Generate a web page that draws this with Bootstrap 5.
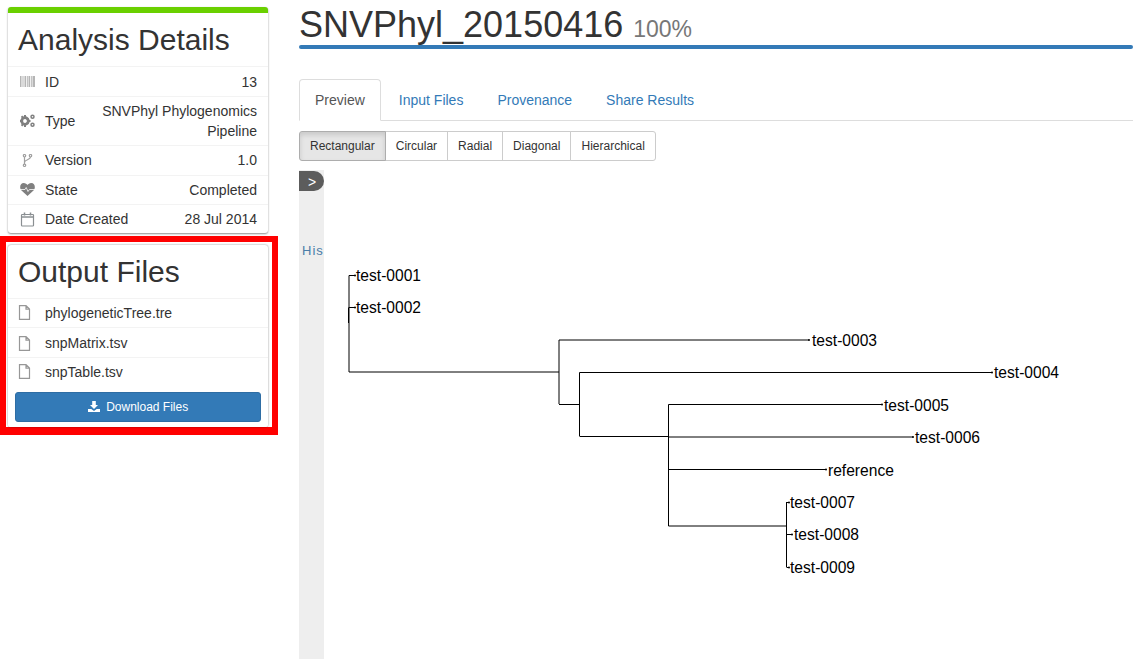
<!DOCTYPE html>
<html lang="en">
<head>
    <meta charset="UTF-8">
    <title>SNVPhyl_20150416</title>
    <link href="https://cdn.jsdelivr.net/npm/bootstrap@5.3.0/dist/css/bootstrap.min.css" rel="stylesheet">
    <style>
        html, body { height: 100%; overflow: hidden; }
        body { font-family: "Liberation Sans", Arial, sans-serif; font-size: 14px; line-height: 20px; color: #333; background: #fff; }
        a { color: #337ab7; text-decoration: none; }
        .page-wrap { height: 659px; }
        .left-col { width: 278px; flex: none; padding-top: 7px; }
        .right-col { width: 834px; flex: none; margin-left: 21px; }
        .info-card { margin: 0 10px 0 8px; border: 0; border-radius: 3px; background: #fff; box-shadow: 0 1px 2px rgba(0,0,0,.45); overflow: hidden; }
        .info-card.analysis { border-top: 6px solid #6ad000; }
        .info-title { font-size: 30px; line-height: 33px; font-weight: 400; margin: 0; padding: 10px; }
        .list-group-flush .info-row { display: flex; align-items: center; padding: 4.25px 11px 4.25px 12px; border-width: 1px 0 0; border-style: solid; border-color: #f3f3f3; border-radius: 0; color: #333; background: transparent; white-space: nowrap; }
        .list-group-flush .info-row.nudge-down { padding-top: 5px; padding-bottom: 3.5px; }
        .list-group-flush .info-row.last-row { padding-bottom: 3.25px; }
        .info-icon { width: 25px; flex: none; display: flex; }
        .info-value { margin-left: auto; text-align: right; width: 165px; white-space: normal; }
        .red-box { border: 6px solid #f00; border-bottom-width: 8px; margin: 3px 0 0 0; padding: 3px 4px 0 2px; height: 199px; width: 278px; }
        .red-box .info-card { margin: 0; box-shadow: 0 0 2px rgba(0,0,0,.5); }
        .list-group-flush .file-row { padding-left: 10px; }
        .file-row .info-icon { width: 27px; }
        .btn-row { border-top: 1px solid #f3f3f3; }
        .download-btn { display: block; margin: 6px 7px 5px; background: #337ab7; border: 1px solid #2e6da4; color: #fff; font-size: 12px; line-height: 18px; padding: 5px 10px; border-radius: 3px; width: 246px; }
        .download-btn svg { vertical-align: -1px; margin-right: 3px; }
        .run-title { font-size: 36px; line-height: 40px; font-weight: 400; margin: 0; padding-top: 5px; height: 45px; }
        .run-title small { font-size: 23px; color: #777; }
        .title-rule { height: 4px; background: #337ab7; border-radius: 2px; }
        .result-tabs { margin-top: 30px; border-bottom: 1px solid #ddd; font-size: 14px; }
        .result-tabs .nav-link { padding: 10px 15px; line-height: 20px; margin-right: 2px; margin-bottom: -1px; border: 1px solid transparent; border-radius: 4px 4px 0 0; color: #337ab7; }
        .result-tabs .nav-link.active { color: #555; background: #fff; border-color: #ddd #ddd #fff; }
        .layout-btns { margin-top: 10px; }
        .layout-btns .btn { font-size: 12px; line-height: 18px; padding: 5px 10px; color: #333; background: #fff; border: 1px solid #ccc; border-radius: 3px; }
        .layout-btns .btn.active { background: #e6e6e6; border-color: #adadad; box-shadow: inset 0 3px 5px rgba(0,0,0,.125); }
        .layout-btns .btn + .btn { margin-left: -1px; }
        .tree-wrap { margin-top: 9px; height: 489px; }
        .side-strip { width: 25px; flex: none; background: #eee; overflow: hidden; padding-top: 1px; }
        .side-toggle { width: 25px; height: 20px; background: #5c5c5c; color: #fff; border-radius: 0 10px 10px 0; font-size: 14px; line-height: 22px; text-align: center; padding-left: 1px; }
        .side-label { margin: 50px 0 0 3px; font-size: 13px; line-height: 20px; letter-spacing: 1px; color: #4a7da8; white-space: nowrap; }
        .tree-svg { flex: none; display: block; margin-left: 0; }
        .tree-svg text { font-family: "Liberation Sans", Arial, sans-serif; font-size: 15.6px; fill: #000; }
        .tree-svg path { fill: none; stroke: #000; stroke-width: 1; }
    </style>
</head>
<body>
<div class="page-wrap d-flex">
    <div class="left-col">
        <div class="info-card analysis">
            <h2 class="info-title">Analysis Details</h2>
            <ul class="list-group list-group-flush">
                <li class="list-group-item info-row nudge-down">
                    <span class="info-icon">
                        <svg width="15" height="12" viewBox="0 0 15 12"><path d="M0 0h1.500v11H0zM2.500 0h1v11h-1zM4.500 0h1.500v11H4.500zM6.800 0h1v11h-1zM8.500 0h1.500v11H8.500zM10.800 0h1v11h-1zM12.500 0h2.500v11h-2.500z" fill="#b5b5b5"/></svg>
                    </span>
                    <span>ID</span><span class="info-value">13</span>
                </li>
                <li class="list-group-item info-row">
                    <span class="info-icon">
                        <svg width="15" height="14" viewBox="0 0 15 14" fill="#808080">
                            <circle cx="5" cy="7" r="3.300" fill="none" stroke="#808080" stroke-width="2.800"/>
                            <path d="M4 1h2v2.500H4zM4 10.500h2V13H4zM-.5 6h2.500v2H-.5zM8 6h2.500v2H8zM.8 2.900l1.400-1.400 1.700 1.700-1.400 1.400zM6.100 8.800l1.400-1.400 1.700 1.700-1.400 1.400zM.8 11.100l1.400 1.400 1.700-1.700-1.400-1.400zM6.100 5.200l1.400 1.400 1.700-1.700-1.400-1.400z"/>
                            <circle cx="12.500" cy="2.800" r="1.500" fill="none" stroke="#808080" stroke-width="1.500"/>
                            <circle cx="12.500" cy="10.800" r="1.500" fill="none" stroke="#808080" stroke-width="1.500"/>
                        </svg>
                    </span>
                    <span>Type</span><span class="info-value">SNVPhyl Phylogenomics Pipeline</span>
                </li>
                <li class="list-group-item info-row">
                    <span class="info-icon">
                        <svg width="15" height="13" viewBox="0 0 15 13" fill="none" stroke="#a0a0a0" stroke-width="1.200"><circle cx="4.500" cy="1.700" r="1.200"/><circle cx="4.500" cy="11.300" r="1.200"/><circle cx="10.500" cy="1.700" r="1.200"/><path d="M4.500 3v7M10.500 3c0 3-6 2.500-6 5.500"/></svg>
                    </span>
                    <span>Version</span><span class="info-value">1.0</span>
                </li>
                <li class="list-group-item info-row">
                    <span class="info-icon">
                        <svg width="15" height="13" viewBox="0 0 15 13"><path d="M7.500 13L1.500 7.500C-.8 5-.2 0 3.800 0c1.700 0 3 1 3.700 2 .7-1 2-2 3.700-2 4 0 4.600 5 2.300 7.500z" fill="#808080"/><path d="M0 6.500h5l1.200-2 1.800 4 1.400-2h5.600" fill="none" stroke="#fff" stroke-width=".8"/></svg>
                    </span>
                    <span>State</span><span class="info-value">Completed</span>
                </li>
                <li class="list-group-item info-row last-row">
                    <span class="info-icon">
                        <svg width="15" height="15" viewBox="0 0 15 15" fill="none" stroke="#8a8f92" stroke-width="1.200"><rect x="1.500" y="2.500" width="12" height="11.500" rx=".8"/><path d="M1.500 5h12" stroke-width="1.500"/><path d="M4.500 .5v3M10.500 .5v3" stroke-width="1.500"/></svg>
                    </span>
                    <span>Date Created</span><span class="info-value">28 Jul 2014</span>
                </li>
            </ul>
        </div>
        <div class="red-box">
            <div class="info-card">
                <h2 class="info-title">Output Files</h2>
                <ul class="list-group list-group-flush">
                    <li class="list-group-item info-row file-row">
                        <span class="info-icon"><svg width="13" height="15" viewBox="0 0 13 15" fill="none" stroke="#979797" stroke-width="1.200"><path d="M1.500 .6h6.500l3.500 3.500v10.300h-10zM8 .6v3.500h3.500"/></svg></span>
                        <span>phylogeneticTree.tre</span>
                    </li>
                    <li class="list-group-item info-row file-row nudge-down">
                        <span class="info-icon"><svg width="13" height="15" viewBox="0 0 13 15" fill="none" stroke="#979797" stroke-width="1.200"><path d="M1.500 .6h6.500l3.500 3.500v10.300h-10zM8 .6v3.500h3.500"/></svg></span>
                        <span>snpMatrix.tsv</span>
                    </li>
                    <li class="list-group-item info-row file-row">
                        <span class="info-icon"><svg width="13" height="15" viewBox="0 0 13 15" fill="none" stroke="#979797" stroke-width="1.200"><path d="M1.500 .6h6.500l3.500 3.500v10.300h-10zM8 .6v3.500h3.500"/></svg></span>
                        <span>snpTable.tsv</span>
                    </li>
                    <li class="list-group-item p-0 border-0 btn-row">
                        <a class="btn download-btn" href="#">
                            <svg width="12" height="11" viewBox="0 0 12 11" fill="#fff"><path d="M4.200 0h3.600v4H10L6 8 2 4h2.200zM0 8h3.300L6 10l2.700-2H12v3H0z"/></svg>
                            Download Files
                        </a>
                    </li>
                </ul>
            </div>
        </div>
    </div>
    <div class="right-col">
        <h1 class="run-title">SNVPhyl_20150416 <small>100%</small></h1>
        <div class="title-rule"></div>
        <ul class="nav nav-tabs result-tabs">
            <li class="nav-item"><a class="nav-link active" href="#">Preview</a></li>
            <li class="nav-item"><a class="nav-link" href="#">Input Files</a></li>
            <li class="nav-item"><a class="nav-link" href="#">Provenance</a></li>
            <li class="nav-item"><a class="nav-link" href="#">Share Results</a></li>
        </ul>
        <div class="btn-group layout-btns" role="group">
            <button type="button" class="btn active">Rectangular</button>
            <button type="button" class="btn">Circular</button>
            <button type="button" class="btn">Radial</button>
            <button type="button" class="btn">Diagonal</button>
            <button type="button" class="btn">Hierarchical</button>
        </div>
        <div class="tree-wrap d-flex">
            <div class="side-strip">
                <div class="side-toggle">&gt;</div>
                <div class="side-label">His</div>
            </div>
            <!-- viewBox starts at page coords so tree numbers read off the screenshot -->
            <svg class="tree-svg" width="814" height="489" viewBox="324 170 814 489">
                <path d="M349 275.500V372M349 275.500H355M349 307.500H355M348.500 307.500V323"/>
                <path d="M349 372H559"/>
                <path d="M559 340V404M559 340H809M559 404.500H580"/>
                <path d="M579.500 372.500V436M579.500 372.500H992M579.500 436.500H668.500"/>
                <path d="M668.500 404.500V526M668.500 404.500H882M668.500 437H913M668.500 469.500H826M668.500 526H786.500"/>
                <path d="M786.500 502V567M786.500 502.500H789M786.500 534.500H792M786.500 567.500H789"/>
                <g fill="#000">
                    <circle cx="355" cy="275.500" r="1"/><circle cx="355" cy="307.500" r="1"/>
                    <circle cx="809" cy="340" r="1"/><circle cx="992" cy="372.500" r="1"/>
                    <circle cx="882" cy="404.500" r="1"/><circle cx="913" cy="437" r="1"/>
                    <circle cx="826" cy="469.500" r="1"/><circle cx="789" cy="502.500" r="1"/>
                    <circle cx="792" cy="534.500" r="1"/><circle cx="789" cy="567.500" r="1"/>
                </g>
                <text x="356" y="281">test-0001</text>
                <text x="356" y="313">test-0002</text>
                <text x="812" y="346">test-0003</text>
                <text x="994" y="378">test-0004</text>
                <text x="884" y="411">test-0005</text>
                <text x="915" y="443">test-0006</text>
                <text x="828" y="476">reference</text>
                <text x="790" y="508">test-0007</text>
                <text x="794" y="540">test-0008</text>
                <text x="790" y="573">test-0009</text>
            </svg>
        </div>
    </div>
</div>
<script src="https://cdn.jsdelivr.net/npm/bootstrap@5.3.0/dist/js/bootstrap.bundle.min.js"></script>
</body>
</html>
